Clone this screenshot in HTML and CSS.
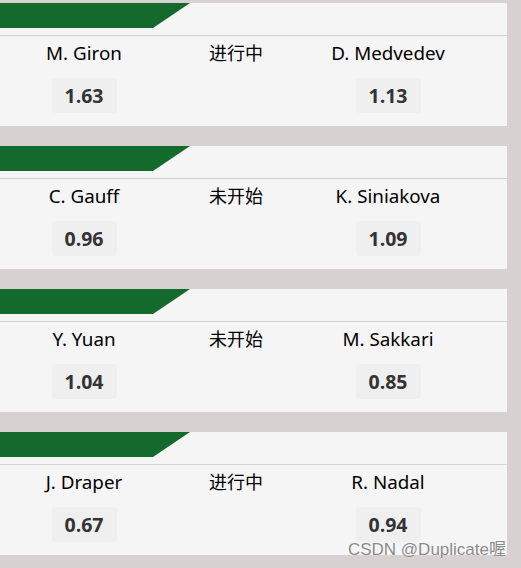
FILE: index.html
```html
<!DOCTYPE html>
<html lang="zh">
<head>
<meta charset="utf-8">
<link rel="stylesheet" href="styles.css">
</head>
<body>
<div class="list">
  <div class="card">
    <div class="card-head"><div class="tag"></div></div>
    <div class="card-body">
      <div class="col"><div class="name">M. Giron</div><div class="odds">1.63</div></div>
      <div class="col"><div class="status">进行中</div></div>
      <div class="col"><div class="name">D. Medvedev</div><div class="odds">1.13</div></div>
    </div>
  </div>
  <div class="card">
    <div class="card-head"><div class="tag"></div></div>
    <div class="card-body">
      <div class="col"><div class="name">C. Gauff</div><div class="odds">0.96</div></div>
      <div class="col"><div class="status">未开始</div></div>
      <div class="col"><div class="name">K. Siniakova</div><div class="odds">1.09</div></div>
    </div>
  </div>
  <div class="card">
    <div class="card-head"><div class="tag"></div></div>
    <div class="card-body">
      <div class="col"><div class="name">Y. Yuan</div><div class="odds">1.04</div></div>
      <div class="col"><div class="status">未开始</div></div>
      <div class="col"><div class="name">M. Sakkari</div><div class="odds">0.85</div></div>
    </div>
  </div>
  <div class="card">
    <div class="card-head"><div class="tag"></div></div>
    <div class="card-body">
      <div class="col"><div class="name">J. Draper</div><div class="odds">0.67</div></div>
      <div class="col"><div class="status">进行中</div></div>
      <div class="col"><div class="name">R. Nadal</div><div class="odds">0.94</div></div>
    </div>
  </div>
</div>
<div class="watermark">CSDN @Duplicate喔</div>
</body>
</html>
```
FILE: styles.css
```css
html, body {
  margin: 0;
  padding: 0;
  background: #d7d1d1;
  height: 568px;
  overflow: hidden;
}
body {
  position: relative;
  font-family: "Noto Sans", "Noto Sans CJK SC", sans-serif;
}
.list {
  display: flex;
  flex-direction: column;
  gap: 20px;
  padding-top: 3px;
  width: 507px;
}
.card {
  background: #f5f5f5;
  height: 123px;
}
.card-head {
  height: 32px;
  border-bottom: 1px solid #d3d3d3;
}
.tag {
  width: 190px;
  height: 25px;
  background: #146a2d;
  clip-path: polygon(0 0, 100% 0, 153px 100%, 0 100%);
}
.card-body {
  display: flex;
  padding-left: 8px;
  padding-top: 5px;
}
.col {
  width: 152px;
  display: flex;
  flex-direction: column;
  align-items: center;
  gap: 13px;
}
.name,
.status {
  font-size: 18px;
  line-height: 24px;
  height: 24px;
  color: #000;
  white-space: nowrap;
}
.name {
  font-size: 18.8px;
}
.odds {
  width: 65px;
  height: 35px;
  border-radius: 4px;
  background: #efefef;
  display: flex;
  align-items: center;
  justify-content: center;
  font-family: "Open Sans", sans-serif;
  font-weight: 700;
  font-size: 19.5px;
  color: #333;
}
.watermark {
  position: absolute;
  right: 15px;
  top: 539px;
  font-family: "Liberation Sans", "Noto Sans CJK SC", sans-serif;
  font-size: 17px;
  line-height: 22px;
  color: #8a8a8a;
  text-shadow: 0 0 1px #fff;
}
```
